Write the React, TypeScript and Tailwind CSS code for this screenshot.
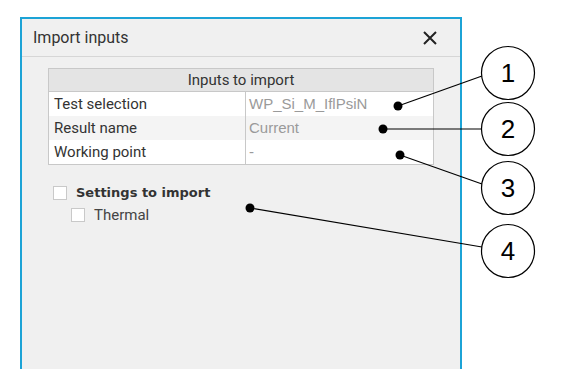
import React from "react";

const rows = [
  ["Test selection", "WP_Si_M_IflPsiN", "bg-white"],
  ["Result name", "Current", "bg-[#f4f4f4]"],
  ["Working point", "-", "bg-white"],
];

const callouts = [
  { n: "1", cx: 508, cy: 73, dx: 398, dy: 106, ex: 482, ey: 76 },
  { n: "2", cx: 508, cy: 129, dx: 383, dy: 129, ex: 481, ey: 129 },
  { n: "3", cx: 508, cy: 188, dx: 400, dy: 155, ex: 482, ey: 184 },
  { n: "4", cx: 508, cy: 251, dx: 250, dy: 208, ex: 482, ey: 247 },
];

function Checkbox() {
  return <span className="inline-block w-[14px] h-[14px] border border-[#c9c9c9] bg-white shrink-0" />;
}

export default function App() {
  return (
    <div className="relative w-[561px] h-[369px] bg-white overflow-hidden">
      <div className="ml-[20px] mt-[17px] w-[442px] h-[360px] border-2 border-b-0 border-[#1ca3d6] bg-[#f0f0f0] flex flex-col">
        <div className="h-[38px] flex items-center justify-between pl-[11px] pr-[22px] border-b border-[#d6d6d6] font-['Roboto',sans-serif] text-[16px] text-[#333]">
          <span>Import inputs</span>
          <svg width="16" height="16" viewBox="0 0 16 16">
            <path d="M2 2 L14 14 M14 2 L2 14" stroke="#222" strokeWidth="2" />
          </svg>
        </div>

        <div className="pl-[26px] pt-[11px]">
          <div className="w-[386px] border border-[#c8c8c8] font-['Roboto',sans-serif] text-[15px]">
            <div className="h-[23px] flex items-center justify-center bg-[#e4e4e4] border-b border-[#c8c8c8] text-[#333]">
              Inputs to import
            </div>
            {rows.map(([label, value, bg]) => (
              <div key={label} className={`h-[24px] flex ${bg}`}>
                <div className="w-[197px] pl-[5px] flex items-center border-r border-[#c8c8c8] text-[#333]">
                  {label}
                </div>
                <div className="flex-1 pl-[3px] flex items-center font-['Liberation_Sans',sans-serif] text-[#9a9a9a]">
                  {value}
                </div>
              </div>
            ))}
          </div>

          <div className="mt-[17px] flex flex-col font-['DejaVu_Sans',sans-serif] text-[13px] text-[#333]">
            <label className="h-[22px] flex items-center gap-[9px] pl-[5px]">
              <Checkbox />
              <span className="font-bold">Settings to import</span>
            </label>
            <label className="h-[22px] flex items-center gap-[9px] pl-[23px]">
              <Checkbox />
              <span className="font-['Roboto',sans-serif] text-[15px] text-[#444]">Thermal</span>
            </label>
          </div>
        </div>
      </div>

      <svg className="absolute inset-0" width="561" height="369" viewBox="0 0 561 369">
        {callouts.map((c) => (
          <g key={c.n}>
            <line x1={c.dx} y1={c.dy} x2={c.ex} y2={c.ey} stroke="#000" strokeWidth="1.2" />
            <circle cx={c.dx} cy={c.dy} r="4.5" fill="#000" />
            <circle cx={c.cx} cy={c.cy} r="26.5" fill="#fff" stroke="#000" strokeWidth="1.2" />
            <text
              x={c.cx}
              y={c.cy + 9}
              textAnchor="middle"
              fontFamily="Liberation Sans, Arial, sans-serif"
              fontSize="26"
              fill="#000"
            >
              {c.n}
            </text>
          </g>
        ))}
      </svg>
    </div>
  );
}
